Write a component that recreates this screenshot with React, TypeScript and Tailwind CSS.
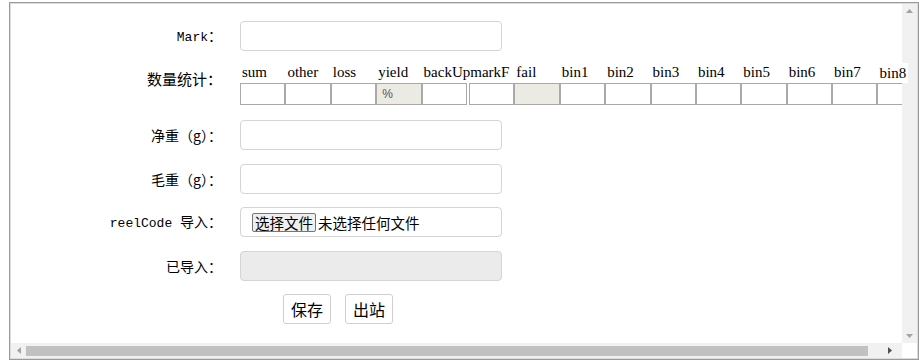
import React from 'react';

type Col = { h: string; gray?: boolean; v?: string; gap?: boolean; over?: boolean };

const cols: Col[] = [
  { h: 'sum' },
  { h: 'other' },
  { h: 'loss' },
  { h: 'yield', gray: true, v: '%' },
  { h: 'backUpmarkF' },
  { h: '', gap: true },
  { h: 'fail', gray: true },
  { h: 'bin1' },
  { h: 'bin2' },
  { h: 'bin3' },
  { h: 'bin4' },
  { h: 'bin5' },
  { h: 'bin6' },
  { h: 'bin7' },
  { h: 'bin8', over: true },
];

function Label({ latin, cjk, big }: { latin?: string; cjk: string; big?: boolean }) {
  return (
    <div
      className={
        'w-[211px] shrink-0 whitespace-pre text-right leading-[20px] text-black ' +
        (big ? 'text-[15px]' : 'text-[14px]')
      }
      style={{ fontFamily: '"Noto Sans CJK SC", sans-serif' }}
    >
      {latin && (
        <span className="text-[13px]" style={{ fontFamily: '"Liberation Mono", monospace' }}>
          {latin}
        </span>
      )}
      {cjk}
    </div>
  );
}

function TextBox({ disabled }: { disabled?: boolean }) {
  return (
    <div
      className={
        'ml-[18px] h-[30px] w-[262px] shrink-0 rounded-[4px] border border-[#d4d4d4] ' +
        (disabled ? 'bg-[#ebebeb]' : 'bg-white')
      }
    />
  );
}

export default function App() {
  return (
    <div className="h-[362px] w-[919px] overflow-hidden bg-white pl-[9px] pt-[2px]">
      <div className="relative h-[358px] w-[910px] border border-[#9a9a9a]">
        <div className="flex h-full w-full flex-col border border-[#dcdcdc]">
          <div className="flex min-h-0 flex-1">
            {/* ── Form ── */}
            <div className="min-w-0 flex-1 overflow-hidden">
              <div className="mt-[17px] flex items-center">
                <Label latin="Mark" cjk="：" />
                <TextBox />
              </div>

              <div className="mt-[12px] flex items-start">
                <div className="mt-[6px]">
                  <Label cjk="数量统计：" big />
                </div>
                <div className="ml-[18px] flex shrink-0">
                  {cols.map((c, i) => (
                    <div
                      key={i}
                      className={'flex w-[45.4px] shrink-0 flex-col ' + (c.gap ? 'ml-[2px]' : '')}
                    >
                      <div
                        className="h-[20px] whitespace-nowrap pl-[2px] text-[15px] leading-[19px] text-black"
                        style={{ fontFamily: '"Liberation Serif", serif' }}
                      >
                        {c.over ? <span className="absolute bg-white pr-[2px] pt-[1px]">{c.h}</span> : c.h}
                      </div>
                      <div
                        className={
                          'h-[22px] border border-[#a9a9a9] pl-[5px] text-[12px] leading-[20px] text-[#555] ' +
                          (c.gray ? 'bg-[#ebebe4]' : 'bg-white')
                        }
                        style={{ fontFamily: '"Liberation Sans", sans-serif' }}
                      >
                        {c.v}
                      </div>
                    </div>
                  ))}
                </div>
              </div>

              <div className="mt-[15px] flex items-center">
                <Label cjk="净重（g）：" />
                <TextBox />
              </div>

              <div className="mt-[14px] flex items-center">
                <Label cjk="毛重（g）：" />
                <TextBox />
              </div>

              <div className="mt-[13px] flex items-center">
                <Label latin="reelCode " cjk="导入：" />
                <div
                  className="ml-[18px] flex h-[30px] w-[262px] shrink-0 items-center rounded-[4px] border border-[#d4d4d4] px-[11px] text-[14.5px] text-black"
                  style={{ fontFamily: '"Noto Sans CJK SC", sans-serif' }}
                >
                  <span className="rounded-[2px] border border-[#767676] bg-[#efefef] px-[2px] leading-[17px]">
                    选择文件
                  </span>
                  <span className="ml-[2px] leading-[17px]">未选择任何文件</span>
                </div>
              </div>

              <div className="mt-[14px] flex items-center">
                <Label cjk="已导入：" />
                <TextBox disabled />
              </div>

              <div
                className="ml-[272px] mt-[13px] flex gap-[14px] text-[16px] text-black"
                style={{ fontFamily: '"Noto Sans CJK SC", serif' }}
              >
                <button className="h-[30px] w-[48px] rounded-[3px] border border-[#cfcfcf] bg-white">
                  保存
                </button>
                <button className="h-[30px] w-[48px] rounded-[3px] border border-[#cfcfcf] bg-white">
                  出站
                </button>
              </div>
            </div>

            {/* ── Vertical scrollbar ── */}
            <div className="flex w-[15px] shrink-0 flex-col items-center justify-between bg-[#f1f1f1] py-[5px]">
              <svg width="7" height="4" viewBox="0 0 7 4">
                <path d="M0 4 L3.5 0 L7 4 Z" fill="#a3a3a3" />
              </svg>
              <svg width="7" height="4" viewBox="0 0 7 4">
                <path d="M0 0 L3.5 4 L7 0 Z" fill="#a3a3a3" />
              </svg>
            </div>
          </div>

          {/* ── Horizontal scrollbar ── */}
          <div className="flex h-[15px] shrink-0">
            <div className="flex flex-1 items-center bg-[#f1f1f1]">
              <div className="flex w-[15px] justify-center">
                <svg width="4" height="7" viewBox="0 0 4 7">
                  <path d="M4 0 L0 3.5 L4 7 Z" fill="#a3a3a3" />
                </svg>
              </div>
              <div className="h-[10px] flex-1 bg-[#c1c1c1]" />
              <div className="flex w-[34px] justify-center pl-[10px]">
                <svg width="4" height="7" viewBox="0 0 4 7">
                  <path d="M0 0 L4 3.5 L0 7 Z" fill="#505050" />
                </svg>
              </div>
            </div>
            <div className="w-[15px] bg-white" />
          </div>
        </div>
      </div>
    </div>
  );
}
